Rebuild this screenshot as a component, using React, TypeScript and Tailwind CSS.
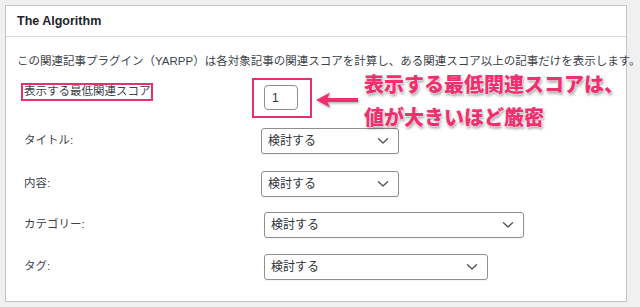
import React from "react";

const font = { fontFamily: '"Liberation Sans", "Noto Sans CJK JP", sans-serif' };

function Chevron() {
  return (
    <svg width="12" height="8" viewBox="0 0 12 8" className="shrink-0">
      <path d="M1.5 1.8 L6 6 L10.5 1.8" fill="none" stroke="#50575e" strokeWidth="1.4" strokeLinecap="round" strokeLinejoin="round" />
    </svg>
  );
}

function Select({ w }: { w: string }) {
  return (
    <div className={`${w} h-[26px] border border-[#8c8f94] rounded-[3px] bg-white flex items-center justify-between pl-[6px] pr-[9px] text-[12px] text-[#2c3338] shadow-[0_1px_1px_rgba(0,0,0,0.05)]`}>
      <span>検討する</span>
      <Chevron />
    </div>
  );
}

export default function App() {
  return (
    <div className="relative w-[640px] h-[307px] bg-[#f0f0f1] pt-[5px] pl-[5px] overflow-hidden" style={font}>
      <div className="w-[622px] h-[297px] border border-[#c3c4c7] bg-white flex flex-col">
        <div className="h-[31px] border-b border-[#dcdcde] flex items-center pl-[11px] text-[12.5px] font-semibold text-[#1d2327]">
          The Algorithm
        </div>
        <div className="flex flex-col pl-[11px] text-[11.5px] text-[#3c434a]">
          <div className="mt-[16px] h-[16px] leading-[16px] whitespace-nowrap">
            この関連記事プラグイン（YARPP）は各対象記事の関連スコアを計算し、ある関連スコア以上の記事だけを表示します。
          </div>
          <div className="mt-[9px] flex items-start h-[40px]">
            <div className="ml-[4px] mt-[5px] w-[132px] h-[18px] border-2 border-[#e8316c] flex items-center pl-[1px] leading-none whitespace-nowrap">
              表示する最低関連スコア
            </div>
            <div className="ml-[99px] w-[60px] h-[40px] border-2 border-[#e8316c] pl-[10px] pt-[5px]">
              <div className="w-[34px] h-[25px] border border-[#8c8f94] rounded-[4px] flex items-center pl-[7px] text-[12px] text-[#2c3338]">
                1
              </div>
            </div>
          </div>
          <div className="mt-[10px] flex items-center h-[26px] pl-[7px]">
            <div className="w-[237px]">タイトル:</div>
            <Select w="w-[138px]" />
          </div>
          <div className="mt-[17px] flex items-center h-[26px] pl-[7px]">
            <div className="w-[237px]">内容:</div>
            <Select w="w-[138px]" />
          </div>
          <div className="mt-[15px] flex items-center h-[26px] pl-[7px]">
            <div className="w-[240px]">カテゴリー:</div>
            <Select w="w-[260px]" />
          </div>
          <div className="mt-[16px] flex items-center h-[26px] pl-[7px]">
            <div className="w-[240px]">タグ:</div>
            <Select w="w-[224px]" />
          </div>
        </div>
      </div>

      <svg className="absolute left-[313px] top-[90px]" width="50" height="20" viewBox="0 0 50 20">
        <defs>
          <filter id="sh" x="-20%" y="-40%" width="140%" height="180%">
            <feDropShadow dx="1" dy="1.5" stdDeviation="1" floodColor="#000" floodOpacity="0.3" />
          </filter>
        </defs>
        <g filter="url(#sh)">
          <path d="M3 10 L17 2.5 L14.5 8 L45 8 L45 12 L14.5 12 L17 17.5 Z" fill="#ee2f6d" strokeLinejoin="round" />
        </g>
      </svg>

      <div
        className="absolute left-[364px] top-[67px] text-[20px] font-black leading-[33px] text-[#f0306e] whitespace-nowrap [text-shadow:0_0_2px_#fff,0_0_2px_#fff,1px_2px_3px_rgba(0,0,0,0.45)]"
        style={{ fontFamily: '"Noto Sans CJK JP", sans-serif' }}
      >
        <div>表示する最低関連スコアは、</div>
        <div>値が大きいほど厳密</div>
      </div>
    </div>
  );
}
